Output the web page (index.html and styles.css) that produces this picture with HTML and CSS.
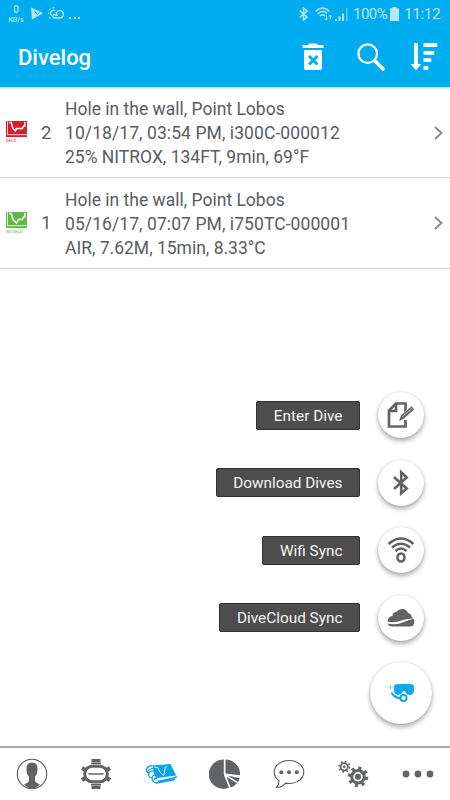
FILE: index.html
```html
<!DOCTYPE html>
<html lang="en">
<head>
<meta charset="utf-8">
<title>Divelog</title>
<link rel="stylesheet" href="styles.css">
</head>
<body>
<div class="app">
  <header class="header">
    <div class="status">
      <div class="speed"><b>0</b><span>KB/s</span></div>
      <svg class="st-play" width="12" height="13" viewBox="0 0 12 13"><path d="M0 0.500L11.500 5.500L11 7L1 12.500Z" fill="currentColor"/><path d="M4 4.500l2.300 3L10.500 3" fill="none" stroke="#00acf0" stroke-width="1"/></svg>
      <svg class="st-weather" width="16" height="13" viewBox="0 0 16 13" fill="none" stroke="currentColor" stroke-width="1.300"><path d="M4 8.500A2.700 2.700 0 0 1 7 3.800M6.500 11h5.300a3.700 3.700 0 1 0-3.600-5Q8 8 10 8.500M6.500 11a1.700 1.700 0 0 1 0-3.400q1.500 0 2 1.400"/><path d="M0 6.500h1.400M5.500 0v1.500M1.200 2l1.200 1M1.200 11l1.200-1"/></svg>
      <span class="st-dots"><i></i><i></i><i></i></span>
      <span class="grow"></span>
      <svg class="st-bt" width="9" height="14" viewBox="0 0 9 14" fill="none" stroke="currentColor" stroke-width="1.500"><path d="M.5 3.500L8 10L4.500 13V1L8 4L.5 10.500"/></svg>
      <svg class="st-wifi" width="17" height="14" viewBox="0 0 17 14" fill="none" stroke="currentColor" stroke-width="1.500"><path d="M.7 4.500Q7.500-2.500 14.300 4.500M2.700 7Q7.500 2 12 6.500M4.800 9.200Q7.500 6.500 10 9"/><path d="M11.300 8v5M9.800 11.500l1.500 1.500 1.500-1.500M15.300 12V8M14 9.500L15.300 8l1.200 1.500" stroke-width="1"/></svg>
      <svg class="st-signal" width="13" height="13" viewBox="0 0 13 13" fill="currentColor"><path d="M0 11h2v2H0zM3.500 8.500h2V13h-2zM7 5.500h2V13H7z"/><path d="M11 0h1.500v13H11z" opacity=".5"/></svg>
      <span class="pct">100%</span>
      <svg class="st-batt" width="9" height="14" viewBox="0 0 9 14"><path d="M2.500 0h4v1.300H9V14H0V1.300h2.500z" fill="currentColor"/></svg>
      <span class="clock">11:12</span>
    </div>
    <div class="toolbar">
      <h1>Divelog</h1>
      <svg class="tb-trash" width="22" height="28" viewBox="0 0 22 28"><path d="M.5 2H6L7.500.5h7L16 2h5.500v3H.500zM2 7h18v18q0 2-2 2H4q-2 0-2-2z" fill="#fff"/><path d="M7 13l8.500 8.500M15.500 13L7 21.500" stroke="#00acf0" stroke-width="2.900"/></svg>
      <svg class="tb-search" width="28" height="28" viewBox="0 0 28 28" fill="none" stroke="#fff"><circle cx="10.700" cy="10.700" r="9.300" stroke-width="2.200"/><path d="M17.500 17.500L26 26" stroke-width="3.600" stroke-linecap="round"/></svg>
      <svg class="tb-sort" width="28" height="28" viewBox="0 0 28 28" fill="#fff"><path d="M4 0h4v21h3.300L6 27.200.5 21H4zM13.500 0h13.700v4H13.500zM13.500 8h10.700v3.700H13.500zM13.500 15.300h7.700V19h-7.700zM13.500 23h4.700v4h-4.700z"/></svg>
    </div>
  </header>

  <main class="list">
    <article class="dive">
      <div class="badge deco">
        <svg width="21" height="16" viewBox="0 0 21 16"><path d="M0 0h21v16H0z" fill="currentColor"/><path d="M1.500 0v13.700H21" fill="none" stroke="#fff" stroke-width=".8"/><path d="M3 1.500h2.200L7 7.500 9.500 10l1-2.500h6L17.500 5h1.300V1" fill="none" stroke="#fff" stroke-width="1.500"/></svg>
        <span>DECO</span>
      </div>
      <div class="num">2</div>
      <div class="lines"><p>Hole in the wall, Point Lobos</p><p class="wide">10/18/17, 03:54 PM, i300C-000012</p><p>25% NITROX, 134FT, 9min, 69°F</p></div>
      <svg class="chev" width="9" height="14" viewBox="0 0 9 14"><path d="M1 1l6.500 6L1 13" fill="none" stroke="#85868a" stroke-width="1.800"/></svg>
    </article>
    <article class="dive">
      <div class="badge nodeco">
        <svg width="21" height="16" viewBox="0 0 21 16"><path d="M0 0h21v16H0z" fill="currentColor"/><path d="M1.500 0v13.700H21" fill="none" stroke="#fff" stroke-width=".8"/><path d="M3 1.500h2.200L7 7.500l3.500 3.500 2-3.500h4L17.500 5h1.300V1" fill="none" stroke="#fff" stroke-width="1.500"/></svg>
        <span>NO DECO</span>
      </div>
      <div class="num">1</div>
      <div class="lines"><p>Hole in the wall, Point Lobos</p><p class="wide">05/16/17, 07:07 PM, i750TC-000001</p><p>AIR, 7.62M, 15min, 8.33°C</p></div>
      <svg class="chev" width="9" height="14" viewBox="0 0 9 14"><path d="M1 1l6.500 6L1 13" fill="none" stroke="#85868a" stroke-width="1.800"/></svg>
    </article>
  </main>

  <div class="actions">
    <div class="action"><span class="tip">Enter Dive</span><button class="fab"><svg width="28" height="28" viewBox="0 0 28 28"><path d="M18.500 11V2.500H9L2 9.500v16h16.500V19M9 2.500V10H2" fill="none" stroke="#626366" stroke-width="2.700"/><path d="M26.500 7L14.500 17.500" stroke="#fff" stroke-width="6"/><path d="M12 20l2-5.500L24.500 5.300l2.700 3L17 17.500z" fill="#626366"/><path d="M15 16L25.500 7" stroke="#fff" stroke-width=".6"/></svg></button></div>
    <div class="action"><span class="tip">Download Dives</span><button class="fab"><svg width="28" height="28" viewBox="0 0 28 28" fill="none" stroke="#626366" stroke-width="2.600"><path d="M7 8L19.700 19.500 14.200 24.300V3.200L19.700 8.500 7 20"/></svg></button></div>
    <div class="action"><span class="tip">Wifi Sync</span><button class="fab"><svg width="28" height="28" viewBox="0 0 28 28" fill="none" stroke="#626366" stroke-width="2.600"><path d="M1.500 8Q14-3 26.500 8M5 11.500Q14 4 23 11.500M8.500 15Q14 10 19.500 15"/><ellipse cx="14" cy="21.500" rx="3.500" ry="4"/></svg></button></div>
    <div class="action"><span class="tip">DiveCloud Sync</span><button class="fab"><svg width="28" height="28" viewBox="0 0 28 28"><path d="M5 22.500Q1.500 22 .7 20 .2 18 .7 16.500 1 12.500 5.500 12 5.500 8 9.500 7.700 11.500 5 15 5 19.500 5 21 9 24.500 9.500 24.500 13 27.500 14.500 27.300 18 27 22.500 23 22.500z" fill="#626366"/><path d="M0 17.800Q8 19 14.500 16.600T28 14.500Q21 16 15.500 18.600T0 19.500z" fill="#fff"/></svg></button></div>
    <button class="fab big"><svg width="28" height="20" viewBox="0 0 28 20"><path d="M8 1.500Q17.500 0 26 1.500l1 1.800V8q-1 4-4 4-3.500 0-4.700-3-1.300-2-2.600 0-1.700 3-4.700 3-3.500-.5-4-4V3.300z" fill="#10a8e8"/><path d="M4.500 9.500q2.500 5 9 6" fill="none" stroke="#10a8e8" stroke-width="2.200"/><circle cx="16.500" cy="15" r="3.100" fill="#fff" stroke="#10a8e8" stroke-width="2"/><path d="M3.500 1v6M.5 4h6" stroke="#8fd4f1" stroke-width="1.100"/></svg></button>
  </div>

  <nav class="tabs">
    <a><svg width="32" height="32" viewBox="0 0 32 32"><circle cx="16" cy="16" r="14.700" fill="#fff" stroke="#58595b" stroke-width="1.100"/><path d="M10.500 9.500Q11 4.500 16 4.500t5.500 5v3q-.3 4.500-2.500 6.500v3.500q0 2 5 3.800Q20.500 30.500 16 30.500T8 26.300q5-1.800 5-3.800V19q-2.200-2-2.500-6.500z" fill="#626366"/></svg></a>
    <a><svg width="32" height="32" viewBox="0 0 32 32"><path d="M11.500 1h9v3.500h-9zM11.500 27.500h9V31h-9z" fill="#626366"/><path d="M11 5.500h10M11 26.500h10" stroke="#626366" stroke-width="1.500"/><path d="M2 10l5 3M30 10l-5 3M2 22l5-3M30 22l-5-3" stroke="#626366" stroke-width="4"/><rect x="4.700" y="8.200" width="22.600" height="15.600" rx="7.500" fill="#fff" stroke="#626366" stroke-width="3"/><path d="M8.500 16h15" stroke="#626366" stroke-width="1.500"/></svg></a>
    <a><svg width="32" height="32" viewBox="0 0 32 32"><path d="M7.500 7.500L25.500 6l5.500 11.500L12 20 9 15.500z" fill="#00a5e8"/><path d="M9.500 9l3 .5 2.500 4.500 3.500 3.500 1-2.500L20 9.500l2-1" fill="none" stroke="#fff" stroke-width=".9"/><path d="M7.500 7.500q-5 .5-6 3.500-.5 3 2.500 4-1 2 .5 4 1.500 1 2.500.5 0 5 4.500 5.500L30 21.500M31 17.500v2L13 23.500M12 20q-3 0-3 2" fill="none" stroke="#00a5e8" stroke-width="1.300"/><path d="M4 15q2-3 5-1.500l3 6.500M7 19.500q1-3 3.500-1.500M3.500 13Q5 10 8 10.500" fill="none" stroke="#00a5e8" stroke-width="1.100"/></svg></a>
    <a><svg width="32" height="32" viewBox="0 0 32 32"><path d="M14.800 1.500V16.500L20 29.800A14.700 14.700 0 1 1 14.800 1.500zM16.500 1.500A14.600 14.600 0 0 1 31 17.200L16.500 15.500zM18.500 17.500L30.700 20.200A14 14 0 0 1 29 24zM17.500 18.500L28 25.200a14.500 14.500 0 0 1-6.300 4.300z" fill="#626366"/></svg></a>
    <a><svg width="32" height="32" viewBox="0 0 32 32"><path d="M16 2.500c8.300 0 14.800 5 14.800 11.500S24.300 25.500 16 25.500q-2 0-3.500-.4Q9 29.500 3.500 29.500 6 27 6 22.800 1.200 19.500 1.200 14C1.200 7.500 7.700 2.500 16 2.500z" fill="#fff" stroke="#58595b" stroke-width="1.100"/><g fill="#626366"><circle cx="8.300" cy="14.200" r="2"/><circle cx="16" cy="14.200" r="2"/><circle cx="23.700" cy="14.200" r="2"/></g></svg></a>
    <a><svg width="32" height="32" viewBox="0 0 32 32" fill="none" stroke="#626366"><circle cx="6.200" cy="8.800" r="3.600" stroke-width="1.700"/><circle cx="6.200" cy="8.800" r="5.200" stroke-width="1.800" stroke-dasharray="1.640 2.440"/><circle cx="6.200" cy="8.800" r="1.400" fill="#626366" stroke="none"/><circle cx="20" cy="18.800" r="6.300" stroke-width="3"/><circle cx="20" cy="18.800" r="8.800" stroke-width="3" stroke-dasharray="3 3.912"/><circle cx="20" cy="18.800" r="3" fill="#626366" stroke="none"/></svg></a>
    <a><svg width="32" height="32" viewBox="0 0 32 32" fill="#626366"><circle cx="4" cy="16" r="3.400"/><circle cx="16" cy="16" r="3.400"/><circle cx="28" cy="16" r="3.400"/></svg></a>
  </nav>
</div>
</body>
</html>
```
FILE: styles.css
```css
* { box-sizing: border-box; margin: 0; padding: 0; }
body { width: 450px; height: 800px; overflow: hidden; background: #fff; font-family: Roboto, "Liberation Sans", sans-serif; }
svg { display: block; flex: none; }
.app { position: relative; display: flex; flex-direction: column; width: 450px; height: 800px; background: #fff; }
.header { flex: none; height: 88px; background: #00acf0; border-bottom: 1px solid #d9dee4; box-shadow: 0 1px 2px rgba(0,0,0,.12); }
.status { display: flex; align-items: center; height: 28px; padding: 0 11px 0 8px; color: #b5e6fa; }
.speed { display: flex; flex-direction: column; align-items: center; width: 16px; padding-bottom: 1px; }
.speed b { font-size: 10px; font-weight: 500; line-height: 12px; }
.speed span { font-size: 7px; font-weight: 500; line-height: 8px; }
.st-play { margin: -2px 0 0 7px; }
.st-weather { margin: -2px 0 0 5px; }
.st-dots { display: flex; gap: 2.500px; margin: 8px 0 0 5px; }
.st-dots i { width: 2px; height: 2px; background: currentColor; }
.grow { flex: 1; }
.st-bt { margin-top: -1px; }
.st-wifi { margin: -1px 0 0 7px; }
.st-signal { margin-left: 3px; }
.pct { margin-left: 5px; font-size: 15px; width: 33px; white-space: nowrap; letter-spacing: -.5px; }
.st-batt { margin: -1px 0 0 4px; }
.clock { margin-left: 5px; width: 35px; font-size: 15.500px; letter-spacing: -.5px; white-space: nowrap; }
.toolbar { display: flex; align-items: center; height: 59px; padding: 0 12px 1px 18px; }
.toolbar h1 { flex: 1; color: #fff; font-size: 22px; font-weight: 500; line-height: 28px; padding-top: 2px; }
.tb-search { margin-left: 33px; }
.tb-sort { margin-left: 25px; }
.list { flex: 1; }
.dive { display: flex; align-items: center; height: 91px; padding: 0 7px 0 6px; border-bottom: 1px solid #d3d3d5; color: #5b5c5f; }
.dive:first-child { height: 90px; }
.badge { width: 30px; flex: none; }
.badge span { display: block; font-size: 4px; line-height: 5px; margin-top: 1px; white-space: nowrap; }
.deco { color: #d71f2b; padding-bottom: 1px; }
.nodeco { color: #5fb946; padding-bottom: 1px; }
.num { width: 29px; padding-left: 5px; font-size: 18.500px; flex: none; }
.lines { flex: 1; padding-top: 2px; font-size: 17.500px; line-height: 24px; white-space: nowrap; }
.dive:first-child .lines { padding-top: 0; }
.wide { letter-spacing: .08px; }
.actions { position: absolute; right: 18px; top: 393px; display: flex; flex-direction: column; align-items: flex-end; }
.action { display: flex; align-items: center; height: 44px; margin: 0 8px 23.500px 0; }
.tip { height: 29px; margin-right: 18px; padding: 0 16.500px; background: #4d4d4d; border: 1px solid #303030; border-radius: 2px; color: #f5f5f5; font-size: 15.350px; line-height: 28px; white-space: nowrap; }
.fab { display: flex; align-items: center; justify-content: center; width: 46px; height: 46px; border: 0; border-radius: 50%; background: #fff; box-shadow: 0 3px 5px rgba(0,0,0,.32), 0 0 2px rgba(0,0,0,.18); }
.big { width: 62px; height: 62px; margin-top: -1px; }
.tabs { flex: none; display: grid; grid-template-columns: repeat(7, 1fr); justify-items: center; align-items: center; height: 54px; border-top: 2px solid #aaa; }
```
